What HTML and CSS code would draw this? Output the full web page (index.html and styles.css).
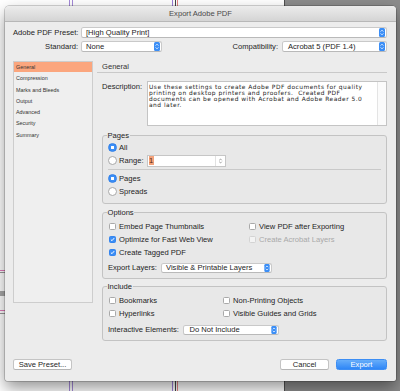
FILE: index.html
```html
<!DOCTYPE html>
<html>
<head>
<meta charset="utf-8">
<title>Export Adobe PDF</title>
<link rel="stylesheet" href="styles.css">
</head>
<body>
<div class="desk">
  <div class="page">
    <span class="guide g1"></span>
    <span class="guide g2"></span>
    <span class="guide g3"></span>
    <span class="guide g4"></span>
    <span class="guide g5"></span>
    <span class="mark m1"></span>
    <span class="mark m2"></span>
    <span class="mark m3"></span>
    <span class="mark m4"></span>
    <span class="mark m5"></span>
  </div>
  <div class="pasteboard"></div>
</div>

<div class="dialog">
  <div class="titlebar">Export Adobe PDF</div>
  <div class="body">
    <div class="row">
      <span class="lbl-main">Adobe PDF Preset:</span>
      <div class="select grow">
        <span class="val">[High Quality Print]</span>
        <svg class="updown" viewBox="0 0 6 9"><rect width="6" height="9" rx="1.5" fill="#3b8ef6"/><path d="M1.6 3.6L3 2.2l1.4 1.4M1.6 5.4L3 6.8l1.4-1.4" fill="none" stroke="#fff" stroke-width=".8"/></svg>
      </div>
    </div>
    <div class="row">
      <span class="lbl-main">Standard:</span>
      <div class="select w-std">
        <span class="val">None</span>
        <svg class="updown" viewBox="0 0 6 9"><rect width="6" height="9" rx="1.5" fill="#3b8ef6"/><path d="M1.6 3.6L3 2.2l1.4 1.4M1.6 5.4L3 6.8l1.4-1.4" fill="none" stroke="#fff" stroke-width=".8"/></svg>
      </div>
      <span class="lbl-compat">Compatibility:</span>
      <div class="select w-compat">
        <span class="val">Acrobat 5 (PDF 1.4)</span>
        <svg class="updown" viewBox="0 0 6 9"><rect width="6" height="9" rx="1.5" fill="#3b8ef6"/><path d="M1.6 3.6L3 2.2l1.4 1.4M1.6 5.4L3 6.8l1.4-1.4" fill="none" stroke="#fff" stroke-width=".8"/></svg>
      </div>
    </div>

    <div class="main">
      <ul class="nav">
        <li class="sel">General</li>
        <li>Compression</li>
        <li>Marks and Bleeds</li>
        <li>Output</li>
        <li>Advanced</li>
        <li>Security</li>
        <li>Summary</li>
      </ul>

      <div class="panel">
        <div class="panel-head">General</div>

        <div class="desc-row">
          <span class="desc-label">Description:</span>
          <div class="textarea">
            <div class="text">Use these settings to create Adobe PDF documents for quality<br>printing on desktop printers and proofers.&nbsp; Created PDF<br>documents can be opened with Acrobat and Adobe Reader 5.0<br>and later.</div>
            <div class="track"></div>
          </div>
        </div>

        <fieldset class="group g-pages">
          <legend>Pages</legend>
          <div class="opt-row"><span class="radio on"></span>All</div>
          <div class="opt-row">
            <span class="radio"></span>Range:
            <div class="range-input">
              <span class="field"><span class="hl">1</span></span>
              <span class="spin"><svg viewBox="0 0 10 10"><path d="M3.6 4.2L5 2.8l1.4 1.4M3.6 5.8L5 7.2l1.4-1.4" fill="none" stroke="#777" stroke-width=".8"/></svg></span>
            </div>
          </div>
          <div class="divider"></div>
          <div class="opt-row"><span class="radio on"></span>Pages</div>
          <div class="opt-row"><span class="radio"></span>Spreads</div>
        </fieldset>

        <fieldset class="group g-options">
          <legend>Options</legend>
          <div class="checks cols-opt">
            <div class="check"><span class="box"></span>Embed Page Thumbnails</div>
            <div class="check"><span class="box"></span>View PDF after Exporting</div>
            <div class="check"><span class="box on"><svg viewBox="0 0 5 5"><path d="M.9 2.6l1.1 1.1L4.2 1.1" fill="none" stroke="#fff" stroke-width="1"/></svg></span>Optimize for Fast Web View</div>
            <div class="check dis"><span class="box"></span>Create Acrobat Layers</div>
            <div class="check"><span class="box on"><svg viewBox="0 0 5 5"><path d="M.9 2.6l1.1 1.1L4.2 1.1" fill="none" stroke="#fff" stroke-width="1"/></svg></span>Create Tagged PDF</div>
          </div>
          <div class="sel-row">
            <span>Export Layers:</span>
            <div class="select small w-layers">
              <span class="val">Visible &amp; Printable Layers</span>
              <svg class="updown" viewBox="0 0 6 9"><rect width="6" height="9" rx="1.5" fill="#3b8ef6"/><path d="M1.6 3.6L3 2.2l1.4 1.4M1.6 5.4L3 6.8l1.4-1.4" fill="none" stroke="#fff" stroke-width=".8"/></svg>
            </div>
          </div>
        </fieldset>

        <fieldset class="group g-include">
          <legend>Include</legend>
          <div class="checks cols-inc">
            <div class="check"><span class="box"></span>Bookmarks</div>
            <div class="check"><span class="box"></span>Non-Printing Objects</div>
            <div class="check"><span class="box"></span>Hyperlinks</div>
            <div class="check"><span class="box"></span>Visible Guides and Grids</div>
          </div>
          <div class="sel-row">
            <span>Interactive Elements:</span>
            <div class="select small w-inter">
              <span class="val">Do Not Include</span>
              <svg class="updown" viewBox="0 0 6 9"><rect width="6" height="9" rx="1.5" fill="#3b8ef6"/><path d="M1.6 3.6L3 2.2l1.4 1.4M1.6 5.4L3 6.8l1.4-1.4" fill="none" stroke="#fff" stroke-width=".8"/></svg>
            </div>
          </div>
        </fieldset>
      </div>
    </div>

    <div class="footer">
      <button class="btn save">Save Preset...</button>
      <span class="spacer"></span>
      <button class="btn cancel">Cancel</button>
      <button class="btn primary">Export</button>
    </div>
  </div>
</div>
</body>
</html>
```

FILE: styles.css
```css
* { box-sizing: border-box; }
html, body { margin: 0; padding: 0; }
body {
  width: 400px;
  height: 391px;
  overflow: hidden;
  position: relative;
  font-family: "Liberation Sans", Arial, sans-serif;
  font-size: 7.6px;
  color: #242424;
}

/* background document */
.desk { display: flex; height: 391px; }
.page {
  position: relative;
  width: 285px;
  background: #fff;
  border-right: 1px solid #505050;
}
.pasteboard { flex: 1; background: #8c8c8c; }
.guide { position: absolute; top: 0; bottom: 0; width: 1px; }
.g1 { left: 69px; background: #a58ad9; }
.g2 { left: 72px; background: #a58ad9; }
.g3 { left: 172px; background: #9c7ed8; }
.g4 { left: 175px; background: #444; }
.g5 { left: 177px; background: #e58585; }
.mark { position: absolute; left: 0; width: 5px; height: 1px; }
.m1 { top: 270px; background: #e07ab8; }
.m2 { top: 272px; background: #999; }
.m3 { top: 291px; height: 5px; background: #a8a8a8; }
.m4 { top: 310px; background: #e07ab8; }
.m5 { top: 313px; background: #999; }

/* dialog window */
.dialog {
  position: absolute;
  left: 5px;
  top: 6px;
  width: 391px;
  height: 375px;
  background: #ececec;
  border-radius: 4px 4px 2px 2px;
  box-shadow: 0 0 0 0.5px rgba(0,0,0,.35), 0 7px 16px rgba(0,0,0,.42);
  display: flex;
  flex-direction: column;
  overflow: hidden;
}
.titlebar {
  height: 16px;
  line-height: 15px;
  text-align: center;
  color: #4a4a4a;
  background: linear-gradient(#ececec, #d4d4d4);
  border-bottom: 1px solid #b7b7b7;
}
.body {
  flex: 1;
  display: flex;
  flex-direction: column;
  padding: 5px 9px 11px 8px;
}

.row { display: flex; align-items: center; height: 11px; }
.row + .row { margin-top: 3px; }
.lbl-main { width: 65px; margin-right: 3px; text-align: right; white-space: nowrap; }
.lbl-compat { flex: 1; text-align: right; margin-right: 4px; }

.select {
  height: 11px;
  display: flex;
  align-items: center;
  padding: 0 1px 0 4px;
  background: #fff;
  border: 1px solid #c9c9c9;
  border-bottom-color: #b9b9b9;
  border-radius: 2.5px;
  white-space: nowrap;
}
.select .val { flex: 1; }
.select.grow { flex: 1; }
.w-std { width: 81px; }
.w-compat { width: 105px; padding-left: 5px; }
.updown { width: 6px; height: 9px; display: block; }
.select.small { height: 10px; }
.select.small .updown { height: 8px; }
.w-layers { width: 111px; }
.w-inter { width: 96px; padding-left: 5px; }

/* main two-column area */
.main { display: flex; align-items: flex-start; margin-top: 9px; }
.nav {
  width: 80px;
  height: 242px;
  margin: 0;
  padding: 0;
  list-style: none;
  background: #efefef;
  border: 1px solid #cdcdcd;
  font-size: 5.4px;
  color: #333;
}
.nav li {
  height: 10px;
  line-height: 10px;
  margin-bottom: 1.3px;
  padding-left: 2px;
  white-space: nowrap;
}
.nav li.sel { background: #fba67e; }

.panel { flex: 1; margin-left: 4px; }
.panel-head {
  padding: 1px 0 0 5px;
  line-height: 10px;
  border-bottom: 1px solid #c9c9c9;
  color: #333;
}

.desc-row { display: flex; margin-top: 8px; padding-left: 5px; }
.desc-label { width: 45px; line-height: 11px; }
.textarea {
  flex: 1;
  height: 45px;
  display: flex;
  background: #fff;
  border: 1px solid #c4c4c4;
}
.textarea .text {
  flex: 1;
  padding: 2px 0 0 1px;
  font-family: "DejaVu Sans", sans-serif;
  font-size: 5.9px;
  line-height: 6px;
  letter-spacing: .5px;
  white-space: nowrap;
  color: #222;
}
.textarea .track { width: 9px; border-left: 1px solid #e4e4e4; background: #fbfbfb; }

/* grouped boxes */
.group {
  margin: 3.5px 0 0 5px;
  padding: 3px 5px 5px 5px;
  min-width: 0;
  border: 1px solid #c3c3c3;
  border-radius: 3px;
  background: #e8e8e8;
}
.group legend {
  padding: 0 0.5px;
  margin-left: -1px;
  line-height: 9px;
}
.g-pages { margin-top: 4.5px; padding-top: 1px; padding-bottom: 4.5px; }

.opt-row { display: flex; align-items: center; height: 13.5px; }
.radio {
  width: 9px;
  height: 9px;
  margin-right: 2px;
  border-radius: 50%;
  border: 1px solid #a8a8a8;
  background: #fff;
  flex: none;
}
.radio.on {
  border-color: #2f7fe8;
  background: radial-gradient(circle, #fff 0, #fff 1.4px, #3b8ef6 1.9px);
}
.range-input {
  margin-left: 3px;
  width: 79px;
  height: 12px;
  display: flex;
  background: #fff;
  border: 1px solid #c6c6c6;
}
.range-input .field { flex: 1; padding-left: 1px; display: flex; align-items: center; }
.range-input .hl { background: #f3a27b; color: #5a2a10; padding: 0 0.5px; line-height: 9px; }
.range-input .spin { width: 10px; border-left: 1px solid #e2e2e2; display: flex; }
.range-input .spin svg { width: 10px; height: 10px; }
.divider { height: 1px; background: #c9c9c9; margin: 1.5px 0; }

.checks { display: grid; grid-auto-rows: 13px; }
.cols-opt { grid-template-columns: 140px auto; }
.cols-inc { grid-template-columns: 114px auto; }
.check { display: flex; align-items: center; white-space: nowrap; }
.box {
  width: 7px;
  height: 7px;
  margin: 0 3px 0 1px;
  border: 1px solid #a9a9a9;
  border-radius: 1.5px;
  background: #fff;
  flex: none;
}
.box.on { background: #3a8df5; border-color: #3585ee; }
.box svg { display: block; width: 5px; height: 5px; }
.check.dis { color: #a9a9a9; }
.check.dis .box { border-color: #d3d3d3; background: #f3f3f3; }

.sel-row { display: flex; align-items: center; height: 10px; margin-top: 4px; }
.g-options .sel-row .select { margin-left: 4px; }
.g-include .sel-row { margin-top: 4.5px; }
.g-include .sel-row .select { margin-left: 4.5px; }

/* footer buttons */
.footer { margin-top: auto; display: flex; align-items: center; }
.spacer { flex: 1; }
.btn {
  height: 11px;
  padding: 0;
  font: inherit;
  line-height: 9px;
  color: #262626;
  text-align: center;
  background: #fff;
  border: 1px solid #c4c4c4;
  border-bottom-color: #b5b5b5;
  border-radius: 2.5px;
}
.save { width: 59px; }
.cancel { width: 49px; }
.primary {
  width: 51px;
  margin-left: 7px;
  color: #fff;
  border-color: #3d8ef4;
  background: linear-gradient(#67aefa, #2f86f6);
}
```
